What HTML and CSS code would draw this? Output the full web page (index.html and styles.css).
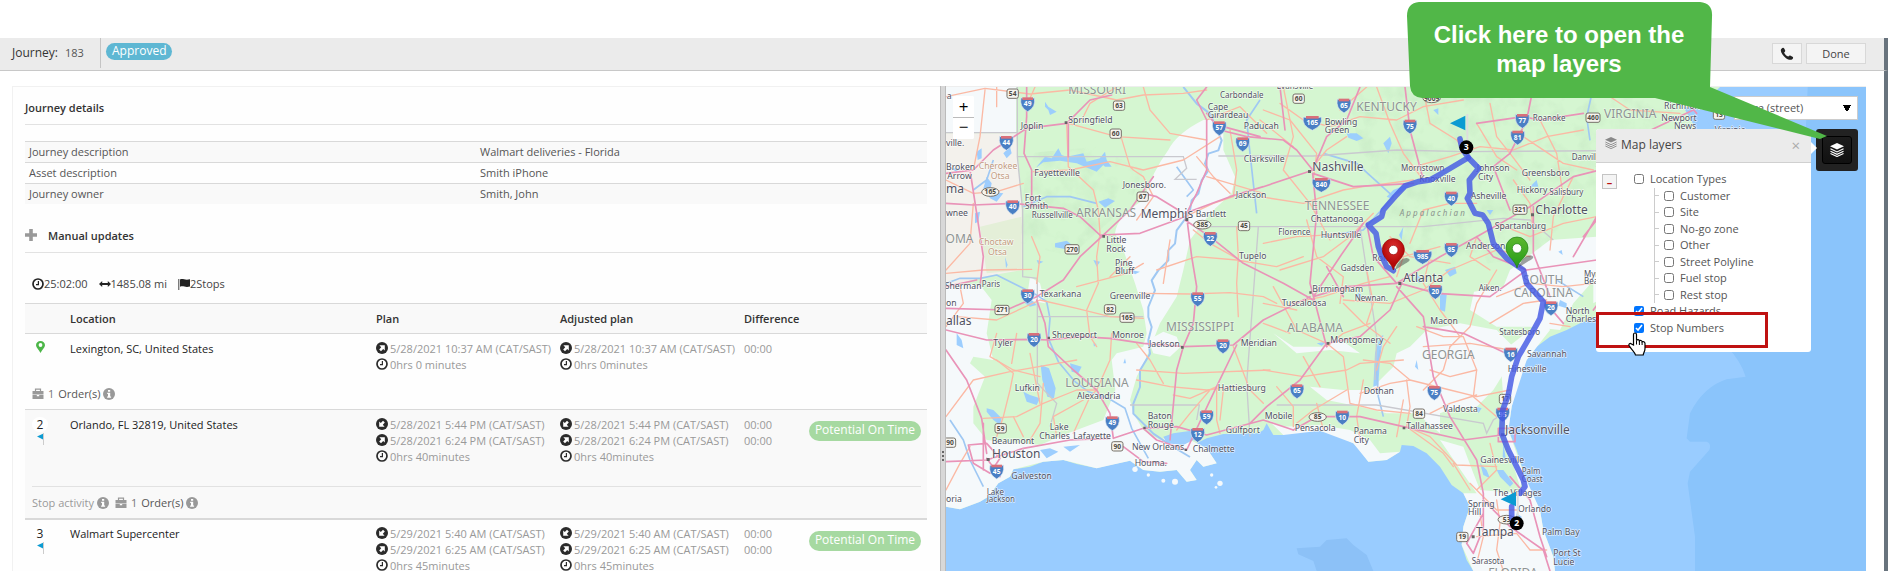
FILE: index.html
```html
<!DOCTYPE html>
<html lang="en">
<head>
<meta charset="utf-8">
<title>Journey 183</title>
<link rel="stylesheet" href="styles.css">
</head>
<body>
<svg class="defs" width="0" height="0" aria-hidden="true">
  <symbol id="clock" viewBox="0 0 12 12"><circle cx="6" cy="6" r="5" fill="none" stroke="currentColor" stroke-width="1.7"/><path d="M6.4 3v3.6H4" fill="none" stroke="currentColor" stroke-width="1.2"/></symbol>
  <symbol id="depart" viewBox="0 0 12 12"><circle cx="6" cy="6" r="6" fill="currentColor"/><path d="M3.4 3.200h5.400v5.400L7.200 7 5 9.200 3.200 7.400 5.200 5.200z" fill="#fff"/></symbol>
  <symbol id="arrive" viewBox="0 0 12 12"><circle cx="6" cy="6" r="6" fill="currentColor"/><path d="M8.600 8.800H3.200V3.400L4.800 5 7 2.800 8.800 4.600 6.800 6.800z" fill="#fff"/></symbol>
  <symbol id="info" viewBox="0 0 12 12"><circle cx="6" cy="6" r="6" fill="currentColor"/><path d="M5 2h2.200v1.800H5zM4.200 4.800h3V8.500h.9V9.800H4.100V8.500H5V6H4.200z" fill="#fff"/></symbol>
  <symbol id="case" viewBox="0 0 12 12"><path d="M3.500 3V1.200h5V3" fill="none" stroke="currentColor" stroke-width="1.200"/><path d="M.5 3h11v3.400h-11zM.5 7h4.300v1.200h2.400V7h4.300v4H.5z" fill="currentColor"/></symbol>
  <symbol id="stopflag" viewBox="0 0 8 12"><path d="M0 3.500 6 .8v5.600z" fill="#0c9bd2"/><path d="M6.500 0v12" stroke="#ccc"/></symbol>
  <symbol id="layers" viewBox="0 0 12 12"><path d="M6 0 12 2.800 6 5.600 0 2.800z" fill="currentColor"/><path d="M.4 5 6 7.700l5.600-2.700M.4 7 6 9.700l5.600-2.700M.4 9 6 11.600l5.600-2.600" fill="none" stroke="currentColor" stroke-width=".9"/></symbol>
</svg>

<div class="page">
  <header class="bar">
    <div class="bar-title"><span class="bar-label">Journey:</span><span>183</span></div>
    <span class="tag tag-info">Approved</span>
    <div class="bar-actions">
      <button class="btn btn-icon" type="button" aria-label="Call"><svg width="14" height="14" viewBox="0 0 14 14"><path d="M1.500 1.800C2.500.5 3.700.5 4.200 1.600l.9 1.700c.4.900-.2 1.500-1 2.100.6 1.700 2.300 3.400 4.300 4.200.7-.8 1.300-1.400 2.200-.9l1.900 1.100c1 .7.800 1.700-.5 2.600-1.300.9-3.600.5-6-1.200C3 9 .9 5.800.8 3.600c0-.7.200-1.200.7-1.800z" fill="#222"/></svg></button>
      <button class="btn btn-done" type="button">Done</button>
    </div>
  </header>

  <main class="split">
    <section class="details">
      <h2 class="title">Journey details</h2>
      <table class="facts">
        <tr><th scope="row">Journey description</th><td>Walmart deliveries - Florida</td></tr>
        <tr><th scope="row">Asset description</th><td>Smith iPhone</td></tr>
        <tr><th scope="row">Journey owner</th><td>Smith, John</td></tr>
      </table>
      <h2 class="title title-plus"><svg width="12" height="12" viewBox="0 0 12 12"><path d="M4.200 0h3.600v4.200H12v3.600H7.800V12H4.200V7.800H0V4.200h4.200z" fill="#999"/></svg>Manual updates</h2>
      <div class="totals">
        <span><svg width="12" height="12"><use href="#clock"/></svg>25:02:00</span>
        <span><svg width="12" height="12" viewBox="0 0 12 12"><path d="M0 6l3.200-3v2h5.600V3L12 6 8.800 9V7H3.200v2z" fill="#222"/></svg>1485.08 mi</span>
        <span><svg width="12" height="12" viewBox="0 0 12 12"><path d="M.8 1v11" stroke="#444"/><path d="M2 1.500c3-1.500 4.500 1.200 10-.2v7.200c-5 1.500-6.500-1.200-10 .3z" fill="#222"/></svg>2Stops</span>
      </div>

      <table class="stops">
        <colgroup><col class="c-no"><col><col class="c-plan"><col class="c-plan"><col class="c-diff"><col class="c-tag"></colgroup>
        <thead><tr><td></td><th>Location</th><th>Plan</th><th>Adjusted plan</th><th>Difference</th><td></td></tr></thead>
        <tbody>
          <tr class="stop">
            <td class="no"><svg width="9" height="12" viewBox="0 0 9 12"><path d="M4.500 0C7 0 9 1.900 9 4.300 9 6.500 6 9 4.500 12 3 9 0 6.500 0 4.300 0 1.900 2 0 4.500 0z" fill="#4cb648"/><circle cx="4.500" cy="4" r="1.900" fill="#fff"/></svg></td>
            <td class="place">Lexington, SC, United States</td>
            <td><div class="line"><svg><use href="#depart"/></svg>5/28/2021 10:37 AM (CAT/SAST)</div><div class="line"><svg><use href="#clock"/></svg>0hrs 0 minutes</div></td>
            <td><div class="line"><svg><use href="#depart"/></svg>5/28/2021 10:37 AM (CAT/SAST)</div><div class="line"><svg><use href="#clock"/></svg>0hrs 0minutes</div></td>
            <td><div class="line">00:00</div></td><td></td>
          </tr>
          <tr><td colspan="6" class="extra extra-first"><div class="foot"><svg><use href="#case"/></svg><span class="cnt">1</span><span class="ord">Order(s)</span><svg><use href="#info"/></svg></div></td></tr>
        </tbody>
        <tbody class="alt">
          <tr class="stop">
            <td class="no"><span class="num">2</span><svg class="sf"><use href="#stopflag"/></svg></td>
            <td class="place">Orlando, FL 32819, United States</td>
            <td><div class="line"><svg><use href="#arrive"/></svg>5/28/2021 5:44 PM (CAT/SAST)</div><div class="line"><svg><use href="#depart"/></svg>5/28/2021 6:24 PM (CAT/SAST)</div><div class="line"><svg><use href="#clock"/></svg>0hrs 40minutes</div></td>
            <td><div class="line"><svg><use href="#arrive"/></svg>5/28/2021 5:44 PM (CAT/SAST)</div><div class="line"><svg><use href="#depart"/></svg>5/28/2021 6:24 PM (CAT/SAST)</div><div class="line"><svg><use href="#clock"/></svg>0hrs 40minutes</div></td>
            <td><div class="line">00:00</div><div class="line">00:00</div></td>
            <td class="state"><span class="tag tag-ok">Potential On Time</span></td>
          </tr>
          <tr><td colspan="6" class="extra"><div class="foot"><span>Stop activity</span><svg class="gap"><use href="#info"/></svg><svg><use href="#case"/></svg><span class="cnt">1</span><span class="ord">Order(s)</span><svg><use href="#info"/></svg></div></td></tr>
        </tbody>
        <tbody class="thick">
          <tr class="stop">
            <td class="no"><span class="num">3</span><svg class="sf"><use href="#stopflag"/></svg></td>
            <td class="place">Walmart Supercenter</td>
            <td><div class="line"><svg><use href="#arrive"/></svg>5/29/2021 5:40 AM (CAT/SAST)</div><div class="line"><svg><use href="#depart"/></svg>5/29/2021 6:25 AM (CAT/SAST)</div><div class="line"><svg><use href="#clock"/></svg>0hrs 45minutes</div></td>
            <td><div class="line"><svg><use href="#arrive"/></svg>5/29/2021 5:40 AM (CAT/SAST)</div><div class="line"><svg><use href="#depart"/></svg>5/29/2021 6:25 AM (CAT/SAST)</div><div class="line"><svg><use href="#clock"/></svg>0hrs 45minutes</div></td>
            <td><div class="line">00:00</div><div class="line">00:00</div></td>
            <td class="state"><span class="tag tag-ok">Potential On Time</span></td>
          </tr>
        </tbody>
      </table>
    </section>

    <div class="splitter"><i></i><i></i><i></i></div>

    <section class="map" aria-label="Map">
      <svg class="map-art" viewBox="48 51 2760 1452" preserveAspectRatio="xMinYMin slice">
        <defs>
          <g id="i"><path d="M-20-18Q-10-12 0-18 10-12 20-18 26 10 0 24-26 10-20-18z" fill="#4a7fc4" stroke="#dfe8f2" stroke-width="2"/><path d="M-16-19H16V-11H-16z" fill="#d9707a"/></g>
          <g id="i3"><path d="M-27-16Q-13-12 0-18 13-12 27-16 33 10 0 24-33 10-27-16z" fill="#4a7fc4" stroke="#dfe8f2" stroke-width="2"/><path d="M-19-19H19V-11H-19z" fill="#d9707a"/></g>
          <g id="u"><rect x="-17" y="-14" width="34" height="28" rx="6" fill="#f6f4ee" stroke="#77726a" stroke-width="3"/></g>
          <g id="u3"><rect x="-21" y="-14" width="42" height="28" rx="6" fill="#f6f4ee" stroke="#77726a" stroke-width="3"/></g>
          <g id="o"><ellipse rx="26" ry="13" fill="#f6f4ee" stroke="#77726a" stroke-width="3"/></g>
          <filter id="relief" x="0" y="0" width="100%" height="100%"><feTurbulence type="fractalNoise" baseFrequency=".018" numOctaves="3" seed="4"/><feColorMatrix values="0 0 0 0 .45  0 0 0 0 .68  0 0 0 0 .45  1.600 0 0 0 -.72"/></filter>
          <clipPath id="hills"><path d="M1250 51H2300L2150 200 1990 400 1800 560 1560 600 1400 520 1300 300zM290 250 500 230 640 300 600 400 420 560 270 520 280 380z"/></clipPath>
          <radialGradient id="red" cy=".3"><stop offset="0" stop-color="#d33"/><stop offset="1" stop-color="#b40808"/></radialGradient>
          <linearGradient id="grn" x2="0" y2="1"><stop offset="0" stop-color="#5cb82e"/><stop offset="1" stop-color="#239a17"/></linearGradient>
        </defs>

        <rect x="48" y="51" width="2760" height="1452" fill="#9cf"/>
        <path fill="#8ac4fb" d="M2640-100 2600 780 2395 835Q2430 870 2447 920L2390 928Q2320 950 2280 1030L2270 1105 2280 1115H2330Q2345 1120 2338 1140L2280 1205 2273 1240 2295 1400V1503H2900V-100z"/>
        <path fill="#8cc1f7" d="M1100 1435l70-5 20-20 60-5 20 20 40 30 20 48h-170l-10-30-45-20z"/>

        <!-- land -->
        <path fill="#d5f6d1" d="M48 51H2370L2330 90 2290 150 2340 230 2330 400 2200 560 2060 660 1998 742 1950 760 1910 780 1860 800 1820 830 1790 870 1770 910 1760 940 1745 1010 1735 1080 1760 1140 1785 1220 1800 1260 1830 1320 1840 1380 1870 1460 1875 1503H1630L1610 1470 1595 1425 1600 1370 1620 1310 1600 1270 1565 1245 1530 1190 1490 1150 1450 1128 1415 1125 1410 1145 1370 1170 1315 1175 1290 1140 1270 1120 1230 1100 1170 1082 1090 1078 1060 1095 1030 1095 1010 1060 1000 1080 985 1090 880 1092 830 1105 800 1120 830 1135 860 1180 820 1190 800 1170 780 1200 800 1230 770 1235 740 1200 690 1205 640 1200 600 1172 540 1185 500 1195 440 1182 400 1170 340 1175 300 1190 250 1198 240 1220 205 1240 175 1280 150 1295 90 1318 48 1310z"/>
        <g fill="#f5f9fb">
          <path d="M48 51H258V188H48zM820 150Q740 190 715 240 670 300 640 390 560 440 555 490L580 540 615 640 640 720 650 790 640 830 560 850 545 870 556 960 520 1050 400 1095 330 1125 170 1110 130 1060 130 1010 165 920 120 880 130 860 190 870 170 790 185 690 150 645 48 640V1310L90 1318 150 1295 175 1280 205 1240 240 1220 250 1198 340 1175 400 1170 500 1195 600 1172 640 1200 690 1205 740 1200 770 1235 800 1230 780 1200 800 1170 820 1190 860 1180 830 1135 800 1120 740 1090 690 1110 640 1080 610 1030 600 990 620 920 650 860 690 760 740 680 760 600 780 510 840 430 905 370 915 320 880 240 880 190 850 150z"/>
          <path d="M655 810 700 785 740 800 752 830 720 860 670 850zM1030 790 1090 830 1180 830 1220 800 1290 850 1200 840 1100 850z"/>
          <path d="M1390 890 1400 850 1440 830 1490 780 1590 760 1700 780 1750 830 1740 880 1690 960 1640 1010 1570 1015 1530 1030 1530 1090 1460 1030 1370 1030 1290 1010 1190 990 1140 950 1240 960 1320 960zM1620 720 1632 665 1720 650 1740 600 1860 510 2000 500 2000 620 1930 700 1890 780 1800 770 1700 770zM1990 520 2080 490 2200 420 2260 450 2200 560 2060 660 1990 700z"/>
          <path d="M1530 1110 1600 1130 1630 1210 1650 1260 1770 1270 1785 1220 1830 1320 1840 1380 1870 1460 1875 1503H1630L1595 1425 1600 1370 1620 1310 1600 1270 1640 1270zM1015 1050 1060 1070 1170 1065 1260 1080 1320 1110 1350 1150 1410 1145 1370 1170 1315 1175 1270 1120 1170 1082 1060 1095zM1710 850 1800 780 1850 760 1860 780 1790 870 1745 1010 1735 1080 1785 1220 1770 1250 1730 1120z"/>
          <path d="M300 620 330 640 345 700 290 690z"/>
        </g>
        <g fill="#f5f9fb"><circle cx="655" cy="1215" r="5"/><circle cx="615" cy="1198" r="8"/><circle cx="735" cy="1235" r="9"/><circle cx="870" cy="1240" r="8"/><circle cx="858" cy="1252" r="4"/><circle cx="700" cy="1232" r="6"/><circle cx="845" cy="1215" r="5"/></g>
        <path fill="#f3f1ec" d="M48 190H258L275 420V600L190 615 48 650z"/>
        <path fill="#e4efd8" d="M150 470 275 440V600L170 610z"/>
        <g clip-path="url(#hills)"><rect x="250" y="51" width="2100" height="640" filter="url(#relief)" opacity=".45"/></g>
        <g fill="#9cf" opacity=".95">
          <path d="M320 290l25-30 20 5 20-30 10 20 15 5 50-10 10 25 40-10 10 20-20 20-60-25-50-8-50 5-20 15zM345 95l10 15 25 15-20 10-5-15-10-10zM505 395l30-10 20 8-30 20zM505 270l20-25 5 25 15 20-20 0zM375 520l35-8 25 20-30 5-30-5zM220 250l20-20 5 20-15 15zM140 245l15-10 0 30-12 5zM170 320l15 20-5 25 40 5-20 25-20-10-20-30zM135 430l15-5-5 30-10 5zM60 295h30l-10 10zM80 790l15 20 5 25-20-10zM285 700l20-10 15 15-20 5z"/>
          <path d="M332 885l25 10 20 60-5 30-20-5-15-50zM280 965l20 10 30 10-10 20-30-10zM170 1015l20 5 25 25-5 20-20-15-20-25zM330 1140l30-5 25 10-35 20zM400 1130l50-5-30 20zM420 880l35 10-10 20-20-5zM700 1100l30-10 70-10 10 20-50 25-50-5z"/>
          <path d="M490 820l10 2-8 8zM580 880l5-15 3 15zM225 560l8 25-5 10zM320 570l20 5-15 8zM490 570l20 5-10 15zM600 600l30 5-15 8zM560 590l20 5-10 8z"/>
          <path d="M1250 190l30 0 20 15-20 8-25-10zM1360 220l20-20 5 20-10 30zM1510 120l15-5 0 20zM1530 665l20 10-5 50-15-5zM1545 600l30-10 5 20-20 10zM1440 340l-50 20-20 20 10 5 50-30zM1330 950l5-100 15-50 10-5-10 70-5 80zM1460 870l5 30-10-10zM1640 1010l15 5-10 15zM1700 1200l20 0 30 40-10 10-30-30zM1650 1180l20 20 10 25-20-10zM1720 1120l8 50-10-10zM1760 1330l15 10-5 20-15-8zM1890 690l20 10 0 15-25-8zM1885 545l10-5 3 15zM1670 420l20 0-10 15zM1460 610l15 20-5 10-15-10zM1160 820l30-5-15 12zM1800 350l20-20 5 20zM1420 470l-5 40-8-15zM1275 680l15-15 5 20z"/>
          <path d="M2105 470l15-4 2 10zM2300 60l20 20-5 40-12-8 4-25zM2260 110l60 10 25 60-40 10z"/>
        </g>
        <g fill="none" stroke="#9fc8f3" stroke-width="5" stroke-linejoin="round">
          <path d="M760 51l40 50 40 30 35 80-10 30-30 10-10 30 10 20-20 30-10 40-20 20-5 30-10 20-15 20-15 20-5 40-20 20 0 30-30 30-20 30 10 30-20 50 0 30 10 30-10 40 5 40-30 50 0 50-20 50 0 30 60 60 60 40 50 30" stroke-width="6"/>
          <path d="M50 640l40-15 60 0 50-10 60 30 60 30 30 20 10 50-5 60 30 70 50 60 40 30 60 20 50 30 20 60 50 90"/>
          <path d="M1350 840l-10 60 5 80 15 60M740 290l50 70 -20 20M130 360l40-30 20-60M980 430l-20-180-10-100 40-60M1990 51l-20 90 10 70M60 1050l40 60 20 60 40 80M500 400l-80-20-70 0-70 30"/>
          <path d="M1180 250l100 30 110 100-90 100-120 20M2020 430l50 60 30 80M1960 680l-80-50"/>
        </g>

        <!-- state borders -->
        <g fill="none" stroke="#c9c9cf" stroke-width="4">
          <path d="M48 188H262M262 51V188L262 260 278 420V620L322 625V740H640M262 260H760L770 295 735 328H800M322 740V940L380 1000 360 1070M865 258H1150L1400 240 1600 245 2310 240M830 470H1480L1720 445 1800 450 1870 510M985 470L950 940 960 1100M1290 470L1340 800 1335 930M600 1005H808L800 1050M1040 1005H1340L1660 1060 1670 1090 1690 1050 1720 1030"/>
        </g>

        <!-- secondary roads -->
        <g fill="none" stroke="#fbb9a4" stroke-width="4" stroke-linejoin="round" stroke-linecap="round">
          <path d="M48 80L165 55 300 72 420 60 560 90 640 75 760 70 830 60M165 60L150 200 130 300M200 51V110M300 85L315 51M455 150L480 100 560 51M640 51L660 120 720 190 830 210M410 160L415 290 490 360 505 420 510 490 500 560 505 640 470 720 480 800 500 830M310 305L420 300 540 275 640 300 760 270 870 200M570 190L600 290 610 300 640 320 670 380 620 450M415 160L560 200 720 210M48 330L130 370 200 365 280 340M48 600L120 520 130 400M48 610L160 600 305 598M305 500L330 560 320 640M80 740L200 750 330 690M48 770L100 700 90 650M200 790L180 860 250 900 330 920M330 690L440 715 540 740 640 745M545 790L540 870 500 960M640 670L780 672 900 668 1000 680 1040 700M540 620L600 560M440 650L590 610 640 580M920 470L925 560 920 640 925 740M680 600L800 560 920 570 1040 590 1120 560M720 510L700 640M790 480L840 520 920 565M765 440L850 400 910 380M910 380L920 300 900 180M830 150L930 110 1010 190M830 320L1000 370M800 260L850 320 900 370M1000 120L1080 150 1160 250 1150 330"/>
          <path d="M48 1040L130 930 240 905 440 870M160 1045L260 1040 340 1000 440 960 500 960M200 870L250 910 240 960 220 1040 200 1100M245 880L260 790M340 940L330 1060 300 1110M430 1090L480 980 500 960M380 1100L370 1040 460 990M620 930L720 950 830 960 920 950M730 975L780 985 860 950 860 1050 870 1090M910 830L960 960 1000 1000M620 900L760 910 1020 900M620 820L660 870 700 940M840 960L780 1030 740 1080M880 960L870 1050M120 1130L90 1180 48 1260M300 850L310 900 330 1000M250 1040L280 1100"/>
          <path d="M990 380L1120 400 1240 360 1300 350 1450 330M1050 100L1120 150 1200 170 1290 140 1400 150 1480 110 1600 90M1150 290L1190 240 1250 200M1060 51L1090 200 1060 300 1140 400 1200 510M1340 51L1380 160 1420 250 1480 330M1420 300L1560 260 1650 230 1750 240 1850 200 1960 180M1480 60L1500 160 1580 210 1620 260M1680 100L1700 200 1740 250 1800 330M1050 600L1180 560 1260 500 1330 430M1130 450L1160 560 1240 620 1230 700M1000 520L1100 500 1280 490M1080 700L1180 680 1300 640 1380 620M1240 690L1380 700 1480 660 1560 600M1500 560L1480 640 1530 720 1590 800M1440 520L1480 420 1560 400 1640 400M1560 600L1700 540 1800 560M1700 600L1640 700 1620 770 1560 830M1700 680L1800 640 1900 650 1990 640M1680 760L1780 700 1850 690M1640 500L1620 560 1680 600M1700 460L1800 500 1900 460 2000 440M1640 160L1700 260 1760 300M1830 150L1880 250 1900 380M1930 320L1870 440 1860 540M1750 330L1800 400 1810 480M1780 200L1900 280 1990 300M1400 620L1420 560 1530 530M1380 500L1440 560 1560 580M990 150L1090 230M1030 650L1100 780 1190 820M1310 51L1230 120"/>
          <path d="M1000 900L1120 920 1250 900 1290 880 1420 870M1190 820L1240 860 1260 1000 1340 1020 1440 1030M1290 970L1380 940 1440 930 1560 960 1640 980 1740 960M1430 930L1440 1010 1430 1070 1540 1150 1570 1190M1430 1070L1500 1100 1580 1185 1700 1190M1440 930L1380 880 1300 870M1460 770L1540 800 1600 800 1640 900 1630 980 1700 1040M1480 830L1620 820 1740 840M1500 1030L1560 1000 1640 975M1570 1180L1620 1260M1000 700L1100 720M1100 1060L1150 1020 1250 960M1040 950L1090 1010 1090 1070M1620 1240L1660 1280 1700 1320 1760 1320M1680 1120L1700 1200 1640 1260M1700 1290L1710 1360 1700 1440 1720 1503M1640 1400L1760 1390 1800 1440 1850 1440M1240 700L1300 760 1380 820M1400 770L1360 830 1340 900M1860 760L1920 770M2010 60L2100 120 2250 130M2000 250L2100 220 2300 280M2060 200L2020 300"/>
          <path d="M1650 1330L1660 1400 1640 1480M1560 830L1540 900 1480 960M1300 930L1280 1040 1290 1110M1420 990L1400 1100M1160 1000L1180 1080M1120 860L1170 950M1320 760L1240 790 1190 830M1640 900L1560 920 1500 900M1000 760L1080 790M1310 600L1330 700 1310 760"/>
        </g>
        <!-- motorways -->
        <g fill="none" stroke="#e993b8" stroke-width="5" stroke-linejoin="round" stroke-linecap="round">
          <path d="M290 51V140L282 250 305 300V410M48 400L130 405 250 400 400 415 450 440 515 500 450 560 400 630 320 680 230 720 48 715M48 310L130 300 190 240 290 175 410 160 480 90 545 75M415 160V260M515 495L630 490 765 440 800 370 830 300V150L800 90 830 51M770 440L785 560 800 650 790 760 760 830M745 420L680 380 640 370M765 450L840 500 940 580 1060 640 1150 690M830 130L870 180 950 200 1060 210 1100 240 1148 300M765 430L900 380 1000 350 1150 300M120 300L160 560 150 650M880 170L990 200M48 650L140 630M515 500L600 420 670 320"/>
          <path d="M48 780L170 810 310 808 355 810 450 800 540 805 640 820 760 830 910 825 1000 750 1140 680M320 690L345 760 355 830 430 900 500 960 540 1030 550 1105 640 1075 680 1110 770 1140M48 840L110 930 155 1045 170 1150M48 1175L170 1170 280 1135 420 1110 540 1105M170 1165L210 1220M115 1125L170 1120 210 1165 180 1210 130 1180zM720 1110L740 900 760 830M640 1075L740 1070 830 1095 1000 1050 1090 1080M920 825L850 970 770 1140M580 1130L640 1175 710 1180M160 1060V1200"/>
          <path d="M1148 300L1190 200 1250 150 1290 51M1148 310L1270 350 1450 340M1148 310L1160 430 1140 640 1190 830M1050 51L1065 180M1425 51L1440 180 1480 330M1300 460L1230 560 1150 680 1250 650 1400 640M1400 640L1330 560 1310 460M1400 640L1530 560 1640 500 1800 410 1930 320 2050 290 2120 200 2290 120M1640 500L1690 560 1790 600M1400 650L1480 740 1510 920 1560 1040 1640 1170 1660 1270 1660 1380M1410 640L1520 670 1680 680 1790 600 2000 570M1740 420L1690 290 1740 250 1790 150 1810 51M1810 410V550L1860 680M1480 770L1600 790 1750 860M1420 630L1380 720 1290 800 1190 820 1110 930 1010 1010 960 1060M1090 1080L1160 1040 1290 1040 1420 1070 1600 1110 1715 1095M1660 1290L1740 1370 1840 1440 1860 1503M1740 1220L1800 1290 1830 1400 1850 1460M1840 690L1900 760M1660 1330L1610 1420 1630 1450 1650 1400M1640 160L1780 140 1830 150 1960 130M1705 1075h50v40h-50zM1190 590L1240 680"/>
          <path d="M2000 290L2040 400 1960 500M2240 60L2300 130M1990 720L2050 640M2050 290L2000 440 1930 560"/>
        </g>

        <!-- road shields -->
        <g class="sh">
          <g transform="translate(293 101)"><use href="#i"/><text y="8">49</text></g><g transform="translate(229 217)"><use href="#i"/><text y="8">44</text></g><g transform="translate(248 410)"><use href="#i"/><text y="8">40</text></g><g transform="translate(293 677)"><use href="#i"/><text y="8">30</text></g><g transform="translate(868 173)"><use href="#i"/><text y="8">57</text></g><g transform="translate(938 221)"><use href="#i"/><text y="8">69</text></g><g transform="translate(841 505)"><use href="#i"/><text y="8">22</text></g><g transform="translate(803 686)"><use href="#i"/><text y="8">55</text></g>
          <g transform="translate(312 808)"><use href="#i"/><text y="8">20</text></g><g transform="translate(879 827)"><use href="#i"/><text y="8">20</text></g><g transform="translate(547 1058)"><use href="#i"/><text y="8">49</text></g><g transform="translate(830 1040)"><use href="#i"/><text y="8">59</text></g><g transform="translate(803 1093)"><use href="#i"/><text y="8">12</text></g><g transform="translate(200 1203)"><use href="#i"/><text y="8">45</text></g>
          <g transform="translate(1242 105)"><use href="#i"/><text y="8">65</text></g><g transform="translate(1147 157)"><use href="#i3"/><text y="8">165</text></g><g transform="translate(1440 168)"><use href="#i"/><text y="8">75</text></g><g transform="translate(1174 343)"><use href="#i3"/><text y="8">840</text></g><g transform="translate(1777 151)"><use href="#i"/><text y="8">77</text></g><g transform="translate(1763 201)"><use href="#i"/><text y="8">81</text></g><g transform="translate(1564 384)"><use href="#i"/><text y="8">40</text></g><g transform="translate(1564 538)"><use href="#i"/><text y="8">85</text></g><g transform="translate(1478 559)"><use href="#i3"/><text y="8">985</text></g><g transform="translate(1516 664)"><use href="#i"/><text y="8">20</text></g><g transform="translate(1863 713)"><use href="#i"/><text y="8">26</text></g>
          <g transform="translate(1742 852)"><use href="#i"/><text y="8">16</text></g><g transform="translate(1513 967)"><use href="#i"/><text y="8">75</text></g><g transform="translate(1101 962)"><use href="#i"/><text y="8">65</text></g><g transform="translate(1237 1041)"><use href="#i"/><text y="8">10</text></g><g transform="translate(1718 1032)"><use href="#i"/><text y="8">95</text></g>
        </g>
        <g class="us">
          <g transform="translate(248 71)"><use href="#u"/><text y="7">54</text></g><g transform="translate(567 107)"><use href="#u"/><text y="7">63</text></g><g transform="translate(557 191)"><use href="#u"/><text y="7">60</text></g><g transform="translate(638 380)"><use href="#u"/><text y="7">67</text></g><g transform="translate(942 468)"><use href="#u"/><text y="7">45</text></g><g transform="translate(426 538)"><use href="#u3"/><text y="7">270</text></g><g transform="translate(216 720)"><use href="#u3"/><text y="7">271</text></g><g transform="translate(540 718)"><use href="#u"/><text y="7">82</text></g><g transform="translate(591 743)"><use href="#u3"/><text y="7">165</text></g><g transform="translate(181 366)"><use href="#o"/><text y="7">165</text></g><g transform="translate(817 464)"><use href="#o"/><text y="7">385</text></g>
          <g transform="translate(212 1075)"><use href="#u"/><text y="7">59</text></g><g transform="translate(60 1118)"><use href="#u"/><text y="7">90</text></g><g transform="translate(562 1129)"><use href="#u"/><text y="7">90</text></g>
          <g transform="translate(1106 86)"><use href="#u"/><text y="7">60</text></g><g transform="translate(1505 85)"><use href="#o"/><text y="7">9009</text></g><g transform="translate(1989 143)"><use href="#u3"/><text y="7">460</text></g><g transform="translate(1770 419)"><use href="#u3"/><text y="7">321</text></g><g transform="translate(1725 987)"><use href="#u"/><text y="7">17</text></g><g transform="translate(1467 1031)"><use href="#u"/><text y="7">84</text></g><g transform="translate(1163 1041)"><use href="#o"/><text y="7">85</text></g><g transform="translate(1597 1401)"><use href="#u"/><text y="7">19</text></g><g transform="translate(1730 1349)"><use href="#o"/><text y="7">53</text></g><g transform="translate(2367 134)"><use href="#u"/><text y="7">13</text></g>
        </g>

        <!-- place names -->
        <g class="lb st">
          <text x="415" y="71">MISSOURI</text><text x="438" y="441">ARKANSAS</text><text x="20" y="518">HOMA</text><text x="708" y="783">MISSISSIPPI</text><text x="406" y="950">LOUISIANA</text><text x="1279" y="124">KENTUCKY</text><text x="1124" y="420">TENNESSEE</text><text x="1072" y="785">ALABAMA</text><text x="1476" y="866">GEORGIA</text><text x="1779" y="641">SOUTH</text><text x="1751" y="680">CAROLINA</text><text x="2022" y="144">VIRGINIA</text><text x="1675" y="1521">FLORIDA</text>
        </g>
        <g class="lb tribe"><text x="146" y="297">Cherokee</text><text x="182" y="326">Otsa</text><text x="146" y="526">Choctaw</text><text x="174" y="555">Otsa</text></g>
        <text class="lb range" x="1409" y="438">A p p a l a c h i a n</text>
        <g class="lb big"><text x="632" y="445">Memphis</text><text x="48" y="766">allas</text><text x="186" y="1164">Houston</text><text x="1147" y="303">Nashville</text><text x="1419" y="637">Atlanta</text><text x="1816" y="431">Charlotte</text><text x="1638" y="1398">Tampa</text><text x="1725" y="1092">Jacksonville</text><text x="48" y="369">ma</text></g>
        <g class="lb">
          <text x="50" y="86">a</text><text x="415" y="158">Springfield</text><text x="272" y="178">Joplin</text><text x="48" y="227">ville.</text><text x="48" y="300">Broken</text><text x="52" y="326">Arrow</text><text x="313" y="319">Fayetteville</text><text x="284" y="392">Fort</text><text x="284" y="417">Smith</text><text x="48" y="437">wnee</text><text x="578" y="355">Jonesboro.</text><text x="797" y="441">Bartlett</text><text x="917" y="385">Jackson</text><text x="529" y="519">Little</text><text x="529" y="545">Rock</text><text x="555" y="588">Pine</text><text x="555" y="612">Bluff</text><text x="927" y="568">Tupelo</text><text x="329" y="680">Texarkana</text><text x="539" y="687">Greenville</text><text x="44" y="657">Sherman</text><text x="833" y="121">Cape</text><text x="833" y="145">Girardeau</text><text x="941" y="178">Paducah</text><text x="941" y="276">Clarksville</text><text x="48" y="709">on</text>
          <text x="366" y="803">Shreveport</text><text x="546" y="803">Monroe</text><text x="657" y="832">Jackson</text><text x="932" y="829">Meridian</text><text x="190" y="829">Tyler</text><text x="254" y="962">Lufkin</text><text x="441" y="987">Alexandria</text><text x="863" y="962">Hattiesburg</text><text x="653" y="1047">Baton</text><text x="653" y="1075">Rouge</text><text x="887" y="1088">Gulfport</text><text x="359" y="1081">Lake</text><text x="328" y="1106">Charles</text><text x="430" y="1106">Lafayette</text><text x="185" y="1122">Beaumont</text><text x="606" y="1140">New Orleans</text><text x="788" y="1146">Chalmette</text><text x="614" y="1188">Houma.</text><text x="244" y="1228">Galveston</text><text x="48" y="1295">oria</text>
          <text x="1184" y="166">Bowling</text><text x="1184" y="190">Green</text><text x="1468" y="335">Knoxville</text><text x="1640" y="304">Johnson</text><text x="1644" y="329">City</text><text x="1775" y="318">Greensboro</text><text x="1760" y="368">Hickory</text><text x="1622" y="386">Asheville</text><text x="1142" y="457">Chattanooga</text><text x="1172" y="505">Huntsville</text><text x="1694" y="477">Spartanburg</text><text x="1608" y="538">Anderson</text><text x="1327" y="573">Rome</text><text x="1147" y="666">Birmingham</text><text x="1055" y="709">Tuscaloosa</text><text x="1501" y="763">Macon</text><text x="1907" y="731">North</text><text x="1907" y="756">Charleston</text><text x="2194" y="153">Newport</text><text x="2232" y="178">News</text><text x="2354" y="188">Virginia</text><text x="2202" y="116">Richmond</text>
          <text x="1201" y="819">Montgomery</text><text x="1301" y="973">Dothan</text><text x="1539" y="1026">Valdosta</text><text x="1429" y="1076">Tallahassee</text><text x="1791" y="861">Savannah</text><text x="1733" y="906">Hinesville</text><text x="1004" y="1047">Mobile</text><text x="1094" y="1083">Pensacola</text><text x="1271" y="1093">Panama</text><text x="1271" y="1118">City</text><text x="1651" y="1180">Gainesville</text><text x="1690" y="1277">The Villages</text><text x="1614" y="1310">Spring</text><text x="1614" y="1334">Hill</text><text x="1764" y="1326">Orlando</text><text x="1836" y="1396">Palm Bay</text><text x="1870" y="1458">Port St</text><text x="1870" y="1485">Lucie</text>
        </g>
        <g class="lb sm">
          <text x="870" y="83">Carbondale</text><text x="305" y="445">Russellville</text><text x="155" y="651">Paris</text><text x="170" y="1275">Lake</text><text x="170" y="1297">Jackson</text><text x="1040" y="58">Evansville</text><text x="1413" y="302">Morristown</text><text x="1808" y="153">Roanoke</text><text x="1925" y="270">Danville</text><text x="1858" y="375">Salisbury</text><text x="1045" y="496">Florence</text><text x="1232" y="603">Gadsden</text><text x="1274" y="692">Newnan.</text><text x="1646" y="664">Aiken.</text><text x="1708" y="796">Statesboro</text><text x="1775" y="1212">Palm</text><text x="1775" y="1237">Coast</text><text x="1625" y="1481">Sarasota</text><text x="1962" y="621">Myrtle</text><text x="1962" y="643">Beach</text>
        </g>
        <g fill="#666"><path d="M404 154h8v8h-8zM766 444h9v9h-9zM517 495h8v8h-8zM170 1164h9v9h-9zM1134 300h9v9h-9zM1405 636h9v9h-9zM1803 430h9v9h-9zM1625 1396h9v9h-9zM1713 1090h9v9h-9zM1190 816h8v8h-8zM1138 664h7v7h-7zM753 828h8v8h-8zM353 800h7v7h-7zM640 1070h7v7h-7zM1418 1070h8v8h-8zM764 1136h7v7h-7z"/></g>

        <!-- route -->
        <g fill="none" stroke="#4459e4" stroke-opacity=".82" stroke-width="17" stroke-linejoin="round" stroke-linecap="round">
          <path d="M1590 207L1596 235 1615 263 1535 310 1500 330 1465 335 1425 348 1395 380 1360 420 1355 440 1315 465 1338 490 1345 530 1352 550 1370 590 1390 602"/>
          <path d="M1615 263L1646 295 1618 330 1620 370 1612 385 1635 430 1658 435 1675 460 1690 520 1730 565 1780 600 1790 640 1840 695 1830 745 1800 800 1765 860 1745 920 1735 975 1718 1020 1715 1090 1735 1140 1755 1180 1780 1230 1785 1250 1770 1270"/>
          <path d="M1745 1310V1342"/>
        </g>

        <g>
          <path d="M1612 132V215" stroke="#ddd" stroke-width="6"/><path d="M1560 160l46-23v44z" fill="#0c9bd2"/><circle cx="1609" cy="232" r="21"/><text class="mk" x="1609" y="241">3</text>
          <path d="M1763 1265V1345" stroke="#ddd" stroke-width="6"/><path d="M1712 1288l46-23v44z" fill="#0c9bd2"/><circle cx="1760" cy="1360" r="21"/><text class="mk" x="1760" y="1369">2</text>
          <path d="M1395 600q10-35 35-36 20 5-5 17z" fill="#333" opacity=".45"/><path d="M1390 600C1384 575 1357 565 1357 539A33 33 0 0 1 1423 539C1423 565 1396 575 1390 600z" fill="url(#red)" stroke="#900" stroke-width="2"/><circle cx="1390" cy="540" r="14" fill="#fff" stroke="#900" stroke-width="2"/>
          <path d="M1766 592q10-35 35-36 20 5-5 17z" fill="#333" opacity=".45"/><path d="M1761 594C1755 569 1728 559 1728 534A33 33 0 0 1 1794 534C1794 559 1767 569 1761 594z" fill="url(#grn)" stroke="#1c7d12" stroke-width="2"/><circle cx="1761" cy="535" r="14" fill="#fff" stroke="#1c7d12" stroke-width="2"/>
        </g>
      </svg>

      <div class="zoom"><button type="button" aria-label="Zoom in">+</button><button type="button" aria-label="Zoom out">−</button></div>

      <div class="map-tools">
        <select class="base" aria-label="Base map"><option>Here (street)</option></select>
        <button class="layers-btn" type="button" aria-label="Map layers"><span><svg width="14" height="14"><use href="#layers"/></svg></span></button>
      </div>

      <aside class="panel">
        <h3 class="panel-head"><svg width="12" height="12"><use href="#layers"/></svg>Map layers<button type="button" aria-label="Close">×</button></h3>
        <div class="panel-body">
          <button class="minus" type="button" aria-label="Collapse">–</button>
          <div class="tree">
            <label><input type="checkbox">Location Types</label>
            <div class="kids">
              <label><input type="checkbox">Customer</label>
              <label><input type="checkbox">Site</label>
              <label><input type="checkbox">No-go zone</label>
              <label><input type="checkbox">Other</label>
              <label><input type="checkbox">Street Polyline</label>
              <label><input type="checkbox">Fuel stop</label>
              <label><input type="checkbox">Rest stop</label>
            </div>
            <label><input type="checkbox" checked>Road Hazards</label>
            <label><input type="checkbox" checked>Stop Numbers</label>
          </div>
        </div>
        <div class="hilite"></div>
        <svg class="hand" width="18" height="24" viewBox="0 0 18 24"><path d="M5.500 13V2.500c0-2 3-2 3 0v6c.6-1.300 2.700-1 2.900.4.900-.9 2.600-.4 2.700.9 1-.6 2.900 0 2.900 1.800v5c0 3-1.500 3.900-1.800 6.400H7.500C7 20 3.200 17.500 1.200 13.800c-1-2 1-3 2.300-1.800z" fill="#fff" stroke="#000" stroke-width="1.200"/><path d="M8.500 8.500v4M11.400 9v4M14.100 10v3" stroke="#000" stroke-width="1"/></svg>
      </aside>
    </section>
  </main>

  <div class="callout">
    <svg width="420" height="138" viewBox="0 0 420 138"><path d="M12 0H293Q306 1 305 15L303 85 420 134 413 137 248 96H15Q4 95 3 84L0 14Q0 1 12 0z" fill="#51b748"/></svg>
    <p>Click here to open the map layers</p>
  </div>
</div>
</body>
</html>
```

FILE: styles.css
```css
* { box-sizing: border-box; }
body { margin: 0; background: #fff; font: 11px/16px "Open Sans", "Noto Sans", sans-serif; color: #555; }
button, select, input { font: inherit; color: inherit; margin: 0; padding: 0; }
h2, h3, p { margin: 0; }
.defs { position: absolute; }
svg { display: block; flex: none; }

.page { position: relative; height: 100vh; padding-top: 38px; display: flex; flex-direction: column; overflow: hidden; }

.bar { display: flex; align-items: center; height: 33px; flex: none; padding-right: 18px; background: #ebebeb; border-bottom: 1px solid #c8c8c8; border-right: 4px solid #68737d; }
.bar-title { display: flex; align-items: center; gap: 7px; width: 101px; height: 30px; padding-left: 12px; align-self: flex-start; border-right: 1px solid #c4c4c4; }
.bar-label { font-size: 12px; color: #333; }
.tag { border-radius: 12px; font-size: 12px; color: #fff; }
.tag-info { margin: 0 0 6px 5px; padding: 0 6px 1px; background: #5eb7d3; }
.bar-actions { display: flex; gap: 4px; margin-left: auto; align-self: flex-start; padding-top: 5px; }
.btn { height: 21px; border: 1px solid #d8d8d8; background: #f4f4f4; }
.btn-icon { width: 30px; display: grid; place-items: center; }
.btn-done { width: 60px; font-size: 11px; color: #444; }

.split { flex: 1; min-height: 0; display: grid; grid-template-columns: 928fr 6px 920fr 18px; padding: 15px 0 0 12px; border-right: 4px solid #68737d; }
.details { min-width: 0; padding: 0 13px 0 12px; overflow: hidden; border: solid #f1f1f1; border-width: 1px 0 0 1px; background: #fefefe; }
.title { height: 38px; padding-top: 13px; border-bottom: 1px solid #e2e2e2; font-size: 11px; line-height: 16px; font-weight: 600; color: #333; }
.facts { width: 100%; margin-top: 16px; border-collapse: separate; border-spacing: 0; }
.facts th, .facts td { width: 50%; height: 21px; padding: 0 4px; border-top: 1px solid #d9d9d9; text-align: left; vertical-align: top; font-weight: 400; line-height: 20px; }
.facts tr:nth-child(odd) { background: #f9f9f9; }
.title-plus { display: flex; align-items: center; gap: 11px; margin-top: 20px; height: 29px; padding: 0 0 4px; }
.title-plus svg { margin-top: -2px; }
.totals { display: flex; gap: 11px; padding: 22px 7px 0; line-height: 17px; color: #444; }
.totals span { display: flex; align-items: center; }
.totals svg { color: #222; }

.stops { width: 100%; margin-top: 11px; table-layout: fixed; border-collapse: separate; border-spacing: 0; }
.c-no { width: 45px; }
.c-plan { width: 184px; }
.c-diff { width: 65px; }
.c-tag { width: 118px; }
.stops td, .stops th { padding: 0; vertical-align: top; text-align: left; }
.stops thead th, .stops thead td { height: 31px; line-height: 29px; background: #f9f9f9; border: solid #d9d9d9; border-width: 1px 0; font-weight: 600; color: #333; }
.stops .stop td { padding-top: 7px; white-space: nowrap; }
.stops .stop .place { color: #222; }
.alt td { background: #f9f9f9; }
.alt .stop td { border-top: 1px solid #d9d9d9; }
.thick .stop td { border-top: 2px solid #d9d9d9; }
.stops .thick .stop td { padding-top: 6px; }
.stops .stop .no { padding-left: 7px; }
.no > svg { margin-left: 4px; }
.num { display: block; width: 16px; margin: 0 0 3px; border-radius: 8px; background: #fff; text-align: center; font-size: 12px; line-height: 15px; color: #222; }
.no > .sf { width: 8px; height: 12px; margin-left: 5px; margin-top: -2px; }
.line { display: flex; align-items: center; gap: 2px; color: #999; }
.line svg { width: 12px; height: 12px; color: #2b2b2b; margin-bottom: 2px; }
.stops .stop .state, .stops .thick .stop .state { padding: 11px 6px 0 0; }
.tag-ok { display: block; margin-left: auto; width: 112px; padding: 1px 0 3px; background: #a6d9a1; text-align: center; white-space: nowrap; }
.stops .extra { padding: 21px 6px 0 7px; }
.stops .extra-first { padding-top: 5px; }
.foot { display: flex; align-items: center; height: 32px; gap: 3px; color: #999; }
.extra-first .foot { height: 31px; }
.alt .foot { border-top: 1px solid #e2e2e2; }
.foot svg { width: 12px; height: 12px; color: #999; }
.foot .gap { margin-right: 3px; }
.cnt { margin: 0 1px 0 1px; color: #777; }
.ord { color: #555; }

.splitter { display: flex; flex-direction: column; gap: 2px; padding: 365px 1px 0; background: #d8d8d8; border: solid #bbb; border-width: 0 1px; }
.splitter i { height: 2px; background: #666; }

.map { position: relative; min-width: 0; overflow: hidden; border-top: 1px solid #eee; }
.map-art { width: 100%; height: 100%; }
.lb { font-family: "Noto Sans", sans-serif; font-size: 26px; fill: #505262; stroke: #fff; stroke-opacity: .7; stroke-width: 4px; paint-order: stroke; stroke-linejoin: round; }
.lb.big { font-size: 36px; }
.lb.sm { font-size: 24px; }
.lb.st { font-size: 36px; fill: #8f9494; stroke-opacity: .4; }
.lb.tribe { font-size: 26px; fill: #c39a80; }
.lb.range { font-size: 24px; font-style: italic; fill: #8a938d; stroke: none; }
.sh text, .us text { font: 700 20px "Noto Sans", sans-serif; text-anchor: middle; fill: #fff; }
.us text { fill: #4d4a44; }
.mk { font: 700 26px "Open Sans", sans-serif; text-anchor: middle; fill: #fff; }

.zoom { position: absolute; left: 7px; top: 9px; width: 21px; border-radius: 2px; overflow: hidden; background: #fff; }
.zoom button { display: block; width: 100%; height: 21px; border: 0; background: #fff; color: #000; font-size: 17px; line-height: 20px; }
.zoom button + button { height: 22px; padding-bottom: 3px; border-top: 1px solid #bbb; line-height: 16px; }

.map-tools { position: absolute; right: 8px; top: 9px; display: flex; flex-direction: column; align-items: flex-end; gap: 9px; }
.base { width: 124px; height: 24px; padding: 0 4px; border: 1px solid #ccc; border-radius: 0; appearance: none; color: #555; background: #fff conic-gradient(from -32deg at 50% 100%, #000 64deg, transparent 0) no-repeat right 6px center / 8px 7px; }
.layers-btn { width: 42px; height: 42px; padding: 5px; border: 0; border-radius: 3px; background: #222; color: #fff; }
.layers-btn span { display: grid; place-items: center; width: 30px; height: 28px; margin-left: 1px; border: 1px solid #000; border-radius: 3px; background: linear-gradient(#1c1c1c, #111); }

.panel { position: absolute; right: 55px; top: 42px; width: 215px; border-radius: 3px; background: #fff; }
.panel::after { content: ""; position: absolute; left: 100%; top: 13px; border: 6px solid transparent; border-left-color: #fff; border-right: 0; }
.panel-head { display: flex; align-items: center; gap: 4px; height: 34px; padding: 0 11px 2px 9px; border-bottom: 1px solid #d0d0d0; border-radius: 3px 3px 0 0; background: #ebebeb; font-size: 12px; font-weight: 400; color: #444; }
.panel-head svg { color: #888; margin-bottom: 3px; }
.panel-head button { margin-left: auto; border: 0; background: none; font-size: 15px; color: #aaa; }
.panel-body { display: flex; gap: 17px; padding: 8px 6px 16px; }
.minus { width: 15px; height: 15px; margin-top: 3px; border: 1px solid #c4c4c4; background: #f4f4f4; font-weight: 700; font-size: 11px; line-height: 12px; color: #b11; }
.tree { flex: 1; display: flex; flex-direction: column; height: 165px; }
.tree label { flex: 1; display: flex; align-items: center; gap: 6px; }
.tree input { width: 10px; height: 10px; }
.kids { flex: 7; display: flex; flex-direction: column; margin-left: 20px; border-left: 1px solid #ccc; }
.kids label::before { content: ""; width: 4px; height: 1px; margin-right: -1px; background: #ccc; }
.hilite { position: absolute; left: 0; top: 183px; width: 172px; height: 36px; border: 3px solid #bf1212; }
.hand { position: absolute; left: 32px; top: 203px; }

.callout { position: absolute; top: 2px; right: 61px; width: 420px; }
.callout p { position: absolute; top: 18px; left: 16px; width: 272px; text-align: center; font: 700 24px/29px "Liberation Sans", Arial, sans-serif; color: #fff; }
```
